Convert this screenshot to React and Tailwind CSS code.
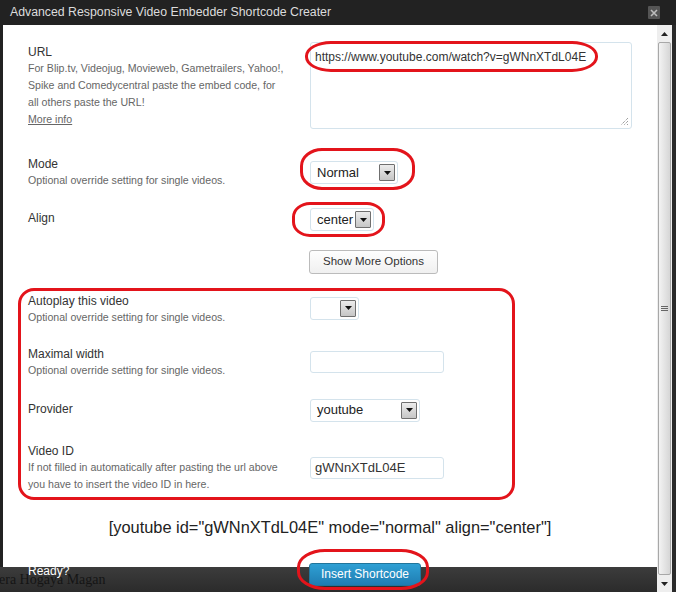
import React from 'react';

const FONT = { fontFamily: '"Liberation Sans", Arial, sans-serif' };

function Arrow() {
  return (
    <span className="flex h-[17px] w-[16px] items-center justify-center rounded-[1px] border border-[#6f6f6f] bg-gradient-to-b from-[#ececec] to-[#c6c6c6]">
      <svg width="7" height="4" viewBox="0 0 7 4">
        <path d="M0 0h7L3.5 4z" fill="#111" />
      </svg>
    </span>
  );
}

function Select({ value, width }) {
  return (
    <div
      className="flex h-[23px] items-center justify-between rounded-[3px] border border-[#d4e3ec] bg-white pl-[6px] pr-[2px] text-[13px] text-[#222]"
      style={{ width }}
    >
      <span>{value}</span>
      <Arrow />
    </div>
  );
}

function TextBox({ value = '', width = 134 }) {
  return (
    <div
      className="flex h-[22px] items-center rounded-[3px] border border-[#d4e3ec] bg-white pl-[4px] text-[13px] text-[#333]"
      style={{ width }}
    >
      {value}
    </div>
  );
}

function Row({ label, desc, children, mt, labelMt = 0, fieldMt = 0 }) {
  return (
    <div className="flex" style={{ marginTop: mt }}>
      <div className="w-[282px] shrink-0" style={{ marginTop: labelMt }}>
        <div className="text-[12px] leading-[16px] text-[#333]">{label}</div>
        {desc ? <div className="whitespace-nowrap text-[10.6px] leading-[17px] text-[#666]">{desc}</div> : null}
      </div>
      <div style={{ marginTop: fieldMt }}>{children}</div>
    </div>
  );
}

function Ring({ className }) {
  return <div className={`pointer-events-none absolute border-[3px] border-[#e3141b] ${className}`} />;
}

export default function App() {
  return (
    <div className="relative h-[592px] w-[676px] overflow-hidden bg-[#222]" style={FONT}>
      <div className="flex h-[25px] items-center justify-between bg-[#222] pl-[10px] pr-[16px]">
        <span className="text-[12.3px] text-[#dcdcdc]">Advanced Responsive Video Embedder Shortcode Creater</span>
        <span className="flex h-[13px] w-[12px] items-center justify-center rounded-[1px] bg-[#555]">
          <svg width="8" height="8" viewBox="0 0 8 8">
            <path d="M1 1l6 6M7 1L1 7" stroke="#bdbdbd" strokeWidth="1.6" />
          </svg>
        </span>
      </div>

      <div className="flex h-[567px]">
        <div className="flex w-[657px] flex-col">
          <div className="relative ml-[3px] h-[542px] bg-white pl-[25px] pt-[17px]">
            <Row
              label="URL"
              labelMt={2}
              desc={
                <>
                  For Blip.tv, Videojug, Movieweb, Gametrailers, Yahoo!,
                  <br />
                  Spike and Comedycentral paste the embed code, for
                  <br />
                  all others paste the URL!
                  <br />
                  <span className="underline">More info</span>
                </>
              }
            >
              <div className="relative h-[87px] w-[322px] rounded-[3px] border border-[#d4e3ec] bg-white pl-[4px] pt-[6px] text-[12px] leading-[16px] text-[#333]">
                https://www.youtube.com/watch?v=gWNnXTdL04E
                <svg className="absolute bottom-[2px] right-[2px]" width="9" height="9" viewBox="0 0 9 9">
                  <path d="M8 1L1 8M8 4L4 8M8 7L7 8" stroke="#777" strokeWidth="1" strokeDasharray="1 1" />
                </svg>
              </div>
            </Row>

            <Row label="Mode" desc="Optional override setting for single videos." mt={27} fieldMt={5}>
              <Select value="Normal" width={88} />
            </Row>

            <Row label="Align" mt={19} labelMt={2}>
              <Select value="center" width={64} />
            </Row>

            <div className="ml-[281px] mt-[17px]">
              <button
                type="button"
                className="h-[24px] w-[129px] rounded-[3px] border border-[#bbb] bg-gradient-to-b from-[#fefefe] to-[#f0f0f0] text-[11.5px] text-[#333]"
              >
                Show More Options
              </button>
            </div>

            <Row label="Autoplay this video" desc="Optional override setting for single videos." mt={19} fieldMt={4}>
              <Select value="" width={49} />
            </Row>

            <Row label="Maximal width" desc="Optional override setting for single videos." mt={20} fieldMt={5}>
              <TextBox width={134} />
            </Row>

            <Row label="Provider" mt={20} labelMt={2}>
              <Select value="youtube" width={110} />
            </Row>

            <Row
              label="Video ID"
              mt={21}
              fieldMt={14}
              desc={
                <>
                  If not filled in automatically after pasting the url above
                  <br />
                  you have to insert the video ID in here.
                </>
              }
            >
              <TextBox value="gWNnXTdL04E" width={134} />
            </Row>

            <div className="-ml-[25px] mt-[24px] text-center text-[16.4px] leading-[20px] text-[#222]">
              [youtube id="gWNnXTdL04E" mode="normal" align="center"]
            </div>

            <Ring className="left-[302px] top-[16px] h-[31px] w-[293px] rounded-[26px/15px]" />
            <Ring className="left-[297px] top-[123px] h-[42px] w-[115px] rounded-[22px/18px]" />
            <Ring className="left-[289px] top-[177px] h-[35px] w-[93px] rounded-[18px/15px]" />
            <Ring className="left-[15px] top-[263px] h-[212px] w-[497px] rounded-[16px]" />
          </div>

          <div className="relative flex h-[25px] bg-gradient-to-b from-[#3c3c3c] to-[#2b2b2b]">
            <span
              className="absolute -left-[1px] top-[4px] text-[14px] leading-[18px] text-[#151515]"
              style={{ fontFamily: '"Liberation Serif", "Times New Roman", serif' }}
            >
              era Hogaya Magan
            </span>
            <span className="absolute left-[28px] -top-[2px] text-[12px] leading-[13px] text-white">Ready?</span>
            <div className="relative ml-[309px] -mt-[6px]">
              <button
                type="button"
                className="h-[23px] w-[112px] rounded-[3px] border border-[#21759b] bg-gradient-to-b from-[#2fa0d4] to-[#1f7db2] text-[12px] text-white"
              >
                Insert Shortcode
              </button>
              <div className="pointer-events-none absolute -left-[12px] -top-[12px] h-[41px] w-[132px] rounded-[28px/18px] border-[3px] border-[#e3141b]" />
            </div>
          </div>
        </div>

        <div className="flex h-[567px] w-[15px] flex-col bg-[#eeeeee]">
          <div className="flex h-[17px] items-center justify-center">
            <svg width="7" height="4" viewBox="0 0 7 4">
              <path d="M0 4h7L3.5 0z" fill="#222" />
            </svg>
          </div>
          <div className="mx-[1px] flex flex-1 items-center justify-center rounded-[2px] border border-[#a8a8a8] bg-gradient-to-r from-[#f3f3f3] to-[#d6d6d6]">
            <svg width="7" height="6" viewBox="0 0 7 6">
              <path d="M0 0.5h7M0 2.5h7M0 4.5h7" stroke="#666" strokeWidth="1" />
            </svg>
          </div>
          <div className="flex h-[17px] items-center justify-center">
            <svg width="7" height="4" viewBox="0 0 7 4">
              <path d="M0 0h7L3.5 4z" fill="#222" />
            </svg>
          </div>
        </div>
        <div className="w-[4px] bg-[#2a2a2a]" />
      </div>
    </div>
  );
}
